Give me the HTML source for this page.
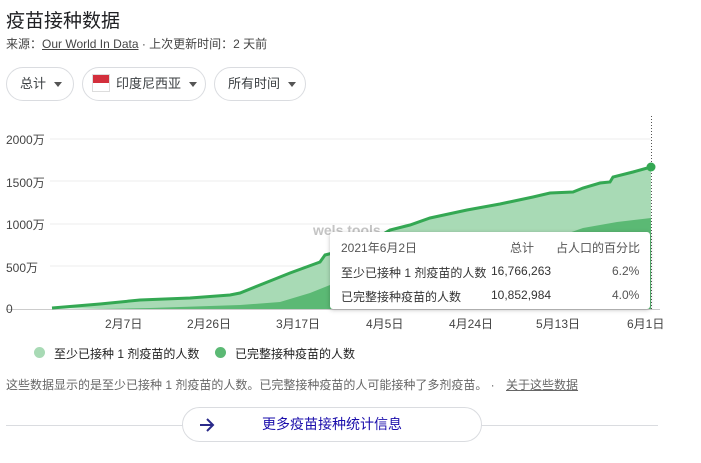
<!DOCTYPE html>
<html><head><meta charset="utf-8"><style>
body{margin:0;width:701px;height:463px;background:#fff;font-family:"Liberation Sans","Noto Sans CJK SC",sans-serif;color:#222;position:relative;overflow:hidden}
.a{position:absolute;white-space:nowrap}
.chip{position:absolute;top:67px;height:34px;border:1px solid #dadce0;border-radius:18px;box-sizing:border-box;font-size:13px;color:#3c4043;line-height:32px}
.tri{display:inline-block;width:0;height:0;border-left:4px solid transparent;border-right:4px solid transparent;border-top:5px solid #555;vertical-align:middle;margin-left:8px}
.yl{position:absolute;left:6px;font-size:12px;color:#444}
.xl{position:absolute;top:315px;font-size:12px;color:#444}
</style></head><body>
<div class="a" style="left:6px;top:6px;font-size:19px;color:#202124">疫苗接种数据</div>
<div class="a" style="left:6px;top:35px;font-size:12px;color:#444">来源：<span style="text-decoration:underline">Our World In Data</span> · 上次更新时间：2 天前</div>
<div class="chip" style="left:6px;width:68px;padding-left:13px">总计<span class="tri"></span></div>
<div class="chip" style="left:82px;width:124px;padding-left:9px"><span style="display:inline-block;width:18px;height:18px;vertical-align:middle;margin-right:6px;margin-top:-3px;background:linear-gradient(#d32f3c 50%,#fff 50%);border:1px solid #ddd;box-sizing:border-box"></span>印度尼西亚<span class="tri"></span></div>
<div class="chip" style="left:214px;width:92px;padding-left:13px">所有时间<span class="tri"></span></div>
<svg class="a" style="left:0;top:0" width="701" height="340">
<g stroke="#ececec"><line x1="50" y1="139" x2="651" y2="139"/><line x1="50" y1="181" x2="651" y2="181"/><line x1="50" y1="224" x2="651" y2="224"/><line x1="50" y1="266" x2="651" y2="266"/></g>
<line x1="6" y1="309.5" x2="660" y2="309.5" stroke="#ccc"/>
<path id="up" d="M52 308 L100 304 L140 300 L190 298 L230 295 L240 293 L270 281 L290 273 L320 262 L325 255 L345 250 L370 242 L390 230 L410 225 L430 218 L467 210 L500 204 L533 197 L550 193 L573 192 L583 188 L600 183 L610 182 L613 177 L633 172 L651 167 L651 309 Z" fill="#a8dab5"/>
<path d="M52 309 L150 308 L240 305 L280 302 L310 293 L330 285 L360 280 L420 270 L480 258 L540 243 L583 228 L617 222 L651 218 L651 309 Z" fill="#5bb974"/>
<path d="M52 308 L100 304 L140 300 L190 298 L230 295 L240 293 L270 281 L290 273 L320 262 L325 255 L345 250 L370 242 L390 230 L410 225 L430 218 L467 210 L500 204 L533 197 L550 193 L573 192 L583 188 L600 183 L610 182 L613 177 L633 172 L651 167" fill="none" stroke="#34a853" stroke-width="3"/>
<line x1="651.5" y1="116" x2="651.5" y2="310" stroke="#555" stroke-dasharray="1,2"/>
<circle cx="651" cy="167" r="4.5" fill="#34a853"/>
</svg>
<div class="yl" style="top:131px">2000万</div><div class="yl" style="top:174px">1500万</div><div class="yl" style="top:216px">1000万</div><div class="yl" style="top:259px">500万</div><div class="yl" style="top:302px">0</div>
<div class="xl" style="left:105px">2月7日</div><div class="xl" style="left:187px">2月26日</div><div class="xl" style="left:276px">3月17日</div><div class="xl" style="left:366px">4月5日</div><div class="xl" style="left:449px">4月24日</div><div class="xl" style="left:536px">5月13日</div><div class="xl" style="left:627px">6月1日</div>
<div class="a" style="left:313px;top:222px;font-size:14px;font-weight:bold;color:#c4c4c4">wels tools</div>
<div class="a" style="left:330px;top:232px;width:320px;height:77px;background:#fff;box-shadow:0 1px 4px rgba(0,0,0,.25);border-radius:3px;font-size:12px;color:#333">
<div class="a" style="left:11px;top:7px;color:#555">2021年6月2日</div><div class="a" style="left:180px;top:7px;color:#555">总计</div><div class="a" style="left:226px;top:7px;color:#555">占人口的百分比</div>
<div class="a" style="left:11px;top:32px">至少已接种 1 剂疫苗的人数</div><div class="a" style="left:161px;top:32px">16,766,263</div><div class="a" style="left:282px;top:32px;color:#555">6.2%</div>
<div class="a" style="left:11px;top:56px">已完整接种疫苗的人数</div><div class="a" style="left:161px;top:56px">10,852,984</div><div class="a" style="left:282px;top:56px;color:#555">4.0%</div>
</div>
<div class="a" style="left:34px;top:347px;width:11px;height:11px;border-radius:50%;background:#a8dab5"></div>
<div class="a" style="left:54px;top:345px;font-size:12px">至少已接种 1 剂疫苗的人数</div>
<div class="a" style="left:215px;top:347px;width:11px;height:11px;border-radius:50%;background:#5bb974"></div>
<div class="a" style="left:235px;top:345px;font-size:12px">已完整接种疫苗的人数</div>
<div class="a" style="left:6px;top:376px;font-size:12px;color:#666">这些数据显示的是至少已接种 1 剂疫苗的人数。已完整接种疫苗的人可能接种了多剂疫苗。 · <span style="margin-left:8px;text-decoration:underline">关于这些数据</span></div>
<div class="a" style="left:6px;top:425px;width:652px;height:1px;background:#dadce0"></div>
<div class="a" style="left:182px;top:407px;width:300px;height:35px;border:1px solid #dadce0;border-radius:18px;background:#fff;box-sizing:border-box;font-size:14px;color:#1a0dab;line-height:33px">
<svg style="position:absolute;left:16px;top:10px" width="16" height="14" viewBox="0 0 16 14"><path d="M1 7 H14 M8 1 L14 7 L8 13" fill="none" stroke="#2a2a8a" stroke-width="2"/></svg><span style="position:absolute;left:79px">更多疫苗接种统计信息</span></div>
</body></html>
